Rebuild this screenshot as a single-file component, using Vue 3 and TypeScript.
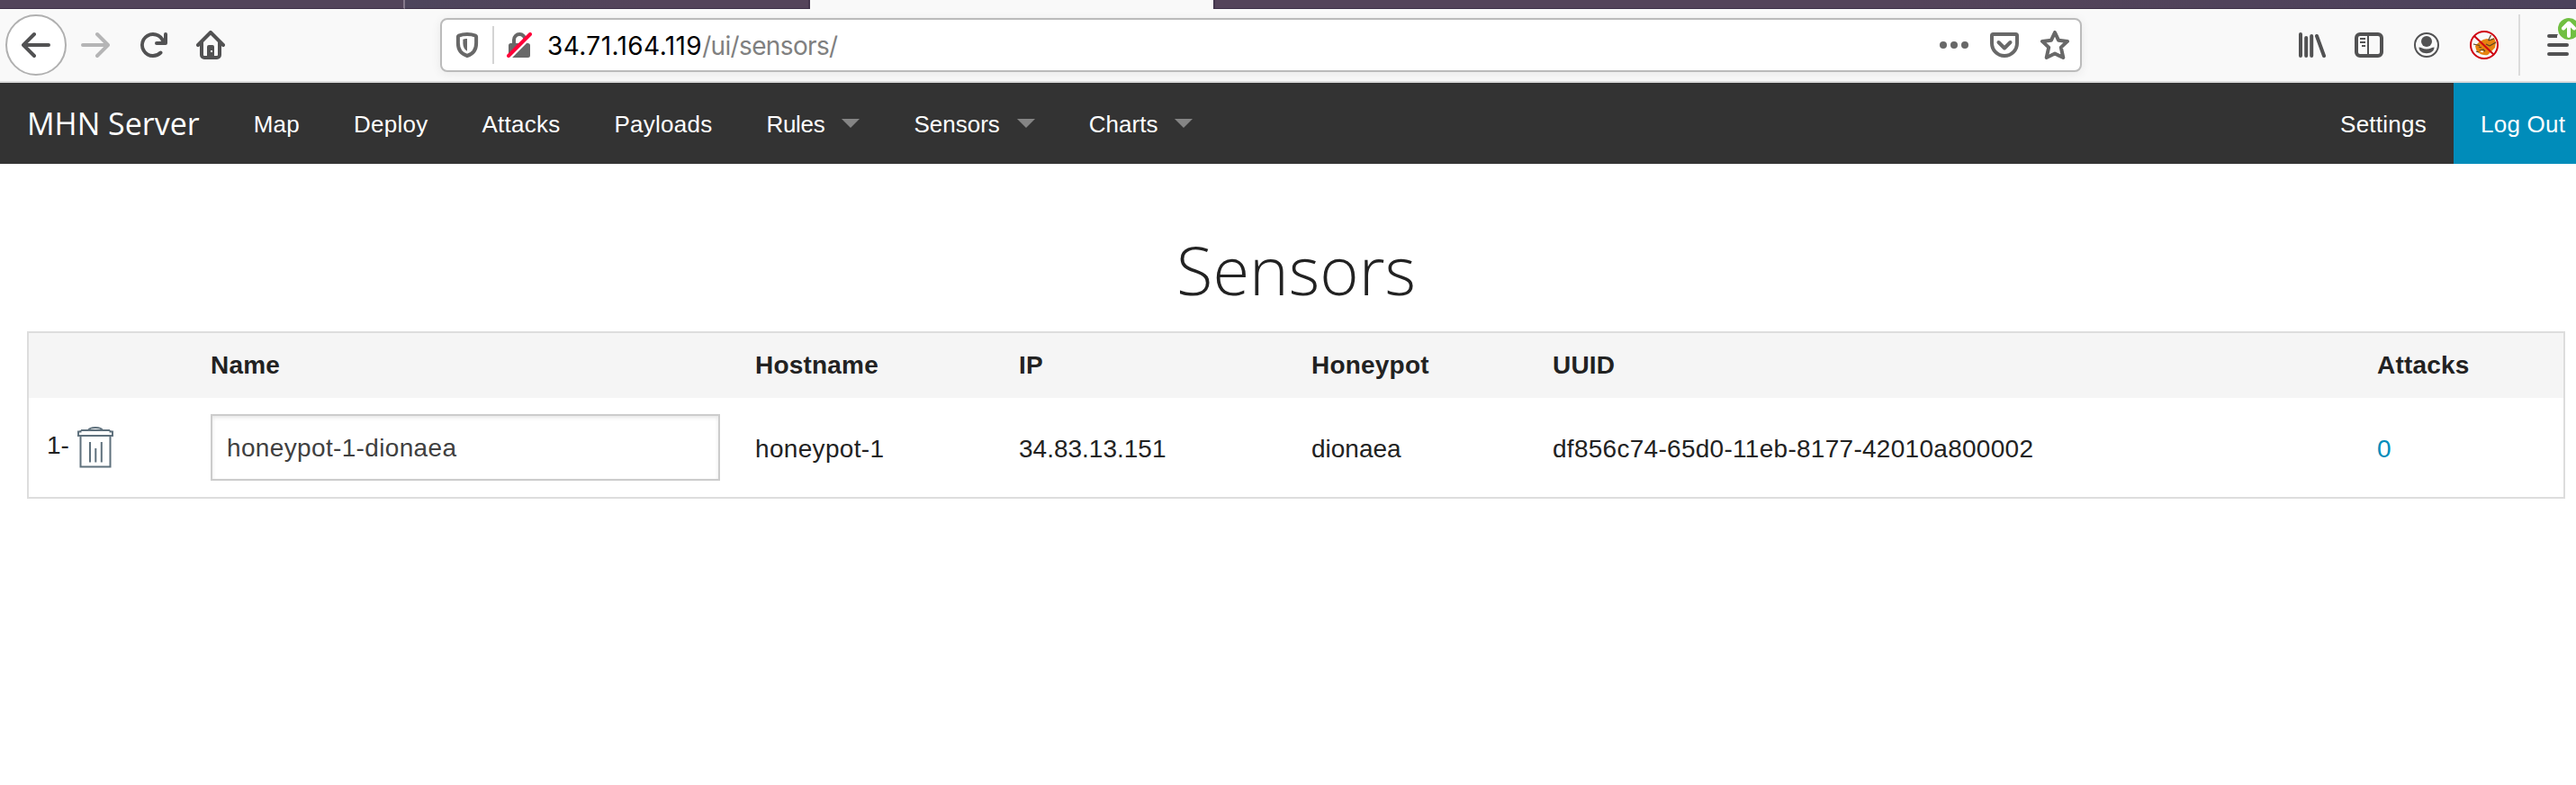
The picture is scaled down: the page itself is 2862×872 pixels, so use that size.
<script setup lang="ts">
interface NavItem {
  label: string
  dropdown?: boolean
}
interface Sensor {
  name: string
  hostname: string
  ip: string
  honeypot: string
  uuid: string
  attacks: number
}

const navItems: NavItem[] = [
  { label: 'Map' },
  { label: 'Deploy' },
  { label: 'Attacks' },
  { label: 'Payloads' },
  { label: 'Rules', dropdown: true },
  { label: 'Sensors', dropdown: true },
  { label: 'Charts', dropdown: true },
]

const headings: string[] = ['', 'Name', 'Hostname', 'IP', 'Honeypot', 'UUID', 'Attacks']

const sensors: Sensor[] = [
  {
    name: 'honeypot-1-dionaea',
    hostname: 'honeypot-1',
    ip: '34.83.13.151',
    honeypot: 'dionaea',
    uuid: 'df856c74-65d0-11eb-8177-42010a800002',
    attacks: 0,
  },
]
</script>

<template>
  <div class="window">
    <div class="tabs">
      <div class="tab first"></div>
      <div class="tab second"></div>
      <div class="tab active"></div>
      <div class="tab rest"></div>
    </div>

    <div class="toolbar">
      <div class="back">
        <svg width="32" height="32" viewBox="0 0 16 16"><path d="M15 7H3.414l4.293-4.293a1 1 0 0 0-1.414-1.414l-6 6a1 1 0 0 0 0 1.414l6 6a1 1 0 0 0 1.414-1.414L3.414 9H15a1 1 0 0 0 0-2z" /></svg>
      </div>
      <svg class="forward" width="32" height="32" viewBox="0 0 16 16"><path d="M1 7h11.586L8.293 2.707a1 1 0 0 1 1.414-1.414l6 6a1 1 0 0 1 0 1.414l-6 6a1 1 0 0 1-1.414-1.414L12.586 9H1a1 1 0 0 1 0-2z" /></svg>
      <svg class="reload" width="32" height="32" viewBox="0 0 16 16"><path d="M15 1a1 1 0 0 0-1 1v2.418A6.995 6.995 0 1 0 8 15a6.954 6.954 0 0 0 4.95-2.05 1 1 0 0 0-1.414-1.414A5.019 5.019 0 1 1 12.549 6H10a1 1 0 0 0 0 2h5a1 1 0 0 0 1-1V2a1 1 0 0 0-1-1z" /></svg>
      <svg class="home" width="32" height="32" viewBox="0 0 32 32">
        <path class="line" d="M2 16 16 2l14 14M6 13v14a3 3 0 0 0 3 3h14a3 3 0 0 0 3-3V13" />
        <path fill-rule="evenodd" d="M12 30V18a2 2 0 0 1 2-2h4a2 2 0 0 1 2 2v12zM16 22v2h2v-2z" />
      </svg>

      <div class="urlbar">
        <svg class="shield" width="26" height="28" viewBox="0 0 26 28">
          <path class="line" d="M13 2c4 0 7 .7 9.300 1.600.5.200.8.600.8 1.200V12c0 7-3.600 12-10.100 14C6.500 24 2.900 19 2.900 12V4.800c0-.6.300-1 .8-1.200C6 2.700 9 2 13 2z" />
          <path d="M13 7c-2 0-3.500.3-4.600.7V12c0 4 1.500 7 4.600 8.800z" />
        </svg>
        <i class="divider"></i>
        <svg class="lock" width="28" height="28" viewBox="0 0 28 28">
          <path class="line" d="M8 14V8.200a6.200 6.200 0 0 1 12.400 0V14" />
          <path d="M4.500 12h19a2.500 2.500 0 0 1 2.500 2.500V25.500a2.500 2.500 0 0 1-2.500 2.500H4.500A2.500 2.500 0 0 1 2 25.500V14.500A2.500 2.500 0 0 1 4.500 12z" />
          <path class="cut" d="M1.500 30.500 30.500 1.500" />
          <path class="slash" d="M2 26l24-24" />
        </svg>
        <span class="host">34.71.164.119</span><span class="path">/ui/sensors/</span>
        <svg class="dots" width="32" height="32" viewBox="0 0 32 32"><circle cx="4" cy="16" r="4" /><circle cx="16" cy="16" r="4" /><circle cx="28" cy="16" r="4" /></svg>
        <svg class="pocket" width="32" height="32" viewBox="0 0 32 32"><path class="line" d="M3.500 4h25a1.500 1.500 0 0 1 1.500 1.500V14a14 14 0 0 1-28 0V5.500A1.500 1.500 0 0 1 3.500 4z" /><path class="line" d="M9.500 13l6.500 6.500 6.500-6.500" /></svg>
        <svg class="star" width="32" height="32" viewBox="0 0 32 32"><path class="line" d="M16 2l4 8.700 10 1.200-7.200 6.700 2.500 11.400L16 25.500 6.700 30l2.500-11.400L2 11.900l10-1.200z" /></svg>
      </div>

      <svg class="library" width="32" height="32" viewBox="0 0 32 32"><path class="line" d="M4 4v24M10.200 8v20M16.200 6v22M22 6l8 22" /></svg>
      <svg class="sidebar" width="32" height="32" viewBox="0 0 32 32">
        <rect class="line" x="2" y="4" width="28" height="24" rx="4" />
        <path d="M14 5h2v22h-2zM6 8h6v2H6zM6 12h6v2H6zM8 16h4v2H8z" />
      </svg>
      <svg class="account" width="28" height="28" viewBox="0 0 28 28">
        <circle class="ring" cx="14" cy="14" r="13" />
        <circle cx="14" cy="10" r="6" />
        <path d="M5.500 16.500c2.500 0 4.500 2 8.500 2s6-2 8.500-2c0 4-3.500 6.700-8.500 6.700s-8.500-2.700-8.500-6.700z" />
      </svg>
      <svg class="fox" width="32" height="32" viewBox="0 0 32 32">
        <path class="fox-face" d="M6 17 10 13l5-3 4-1 3 1 5-2 2 5-1 6-4 4-4 4c-6 1-11-2-13-6z" />
        <path class="fox-mark" d="M4 15l7 1.500M23.500 5l-3 6M21 11l6-2M29 13l-7 4M11 22l4-1 2 2M18 15l4 2M7 23l3 1M10 18l3 1" />
        <path class="fox-eye" d="M12 23l3 .500" />
        <circle class="ban" cx="16" cy="16" r="15" />
        <path class="ban" d="M5 6l22 21" />
      </svg>
      <i class="tool-divider"></i>
      <div class="menu">
        <svg width="24" height="24" viewBox="0 0 24 24"><path d="M2 0h10q-1.500 1.500-1 4H2a2 2 0 0 1 0-4z" /><path class="line" d="M2 12h20M2 22h20" /></svg>
        <svg class="badge" width="24" height="24" viewBox="0 0 24 24"><circle cx="12" cy="12" r="12" /><path d="M12 20V6M6 11.500l6-6 6 6" /></svg>
      </div>
    </div>

    <nav class="topbar">
      <a class="brand">MHN Server</a>
      <a v-for="item in navItems" :key="item.label" class="link" :class="{ dropdown: item.dropdown }">{{ item.label }}</a>
      <span class="grow"></span>
      <a class="link">Settings</a>
      <a class="link logout">Log Out</a>
    </nav>

    <main>
      <h1>Sensors</h1>
      <table>
        <colgroup>
          <col class="c-index" /><col class="c-name" /><col class="c-host" /><col class="c-ip" /><col class="c-pot" /><col class="c-uuid" /><col />
        </colgroup>
        <thead>
          <tr><th v-for="(heading, i) in headings" :key="i">{{ heading }}</th></tr>
        </thead>
        <tbody>
          <tr v-for="(sensor, i) in sensors" :key="sensor.uuid">
            <td>
              <div class="index">
                <span>{{ i + 1 }}-</span>
                <svg width="40" height="46" viewBox="0 0 40 46">
                  <path d="M12 4c2-4 14-4 16 0M4 4h32M3.500 4v1.500H1V10h38V5.500H36.500V4M3.500 10v34.500h33V10M14 17v22.500M20.300 24v15.500M26.800 17v22.500" />
                </svg>
              </div>
            </td>
            <td><input type="text" :value="sensor.name" /></td>
            <td class="text host-cell">{{ sensor.hostname }}</td>
            <td class="text">{{ sensor.ip }}</td>
            <td class="text">{{ sensor.honeypot }}</td>
            <td class="text uuid-cell">{{ sensor.uuid }}</td>
            <td class="text"><a class="count">{{ sensor.attacks }}</a></td>
          </tr>
        </tbody>
      </table>
    </main>
  </div>
</template>

<style>
body {
  margin: 0;
  background: #fff;
}
</style>

<style scoped>
* {
  box-sizing: border-box;
}
.window {
  width: 2862px;
  height: 872px;
  overflow: hidden;
  background: #fff;
  color: #222;
  font-family: "Liberation Sans", Arial, sans-serif;
}
svg {
  display: block;
  flex: none;
}
.tabs {
  display: flex;
  height: 10px;
  background: #f9f9f9;
}
.tab {
  background: #52445a;
  border-bottom: 1px solid #3d3047;
}
.first {
  width: 450px;
  border-right: 2px solid #85798b;
}
.second {
  width: 450px;
  background: linear-gradient(90deg, #4d455c, #54445a 60%);
  border-right: 2px solid #43364c;
}
.active {
  width: 448px;
  background: #f9f9f9;
  border: 0;
}
.rest {
  flex: 1;
  border-left: 2px solid #43364c;
  background: linear-gradient(90deg, #54445a, #54445a 50%, #4c425c);
}
.toolbar {
  display: flex;
  align-items: center;
  height: 82px;
  background: #f9f9f9;
  border-bottom: 2px solid #dcdcdc;
  fill: #525253;
}
.line {
  fill: none;
  stroke: #525253;
  stroke-width: 4;
  stroke-linecap: round;
  stroke-linejoin: round;
}
.back {
  display: flex;
  align-items: center;
  justify-content: center;
  width: 68px;
  height: 68px;
  margin-left: 6px;
  border: 2px solid #b0b0b0;
  border-radius: 50%;
  background: #fff;
}
.forward {
  margin-left: 16px;
  fill: #b5b5b6;
}
.reload {
  margin-left: 32px;
}
.home {
  margin-left: 32px;
}
.urlbar {
  display: flex;
  align-items: center;
  width: 1824px;
  height: 60px;
  margin-left: 239px;
  border: 2px solid #bbb;
  border-radius: 8px;
  background: #fff;
  box-shadow: 0 2px 12px rgba(0, 0, 0, 0.07);
  fill: #686868;
  font: 28px Inter, sans-serif;
  white-space: nowrap;
}
.urlbar .line {
  stroke: #686868;
}
.shield {
  margin-left: 15px;
}
.divider {
  width: 2px;
  height: 42px;
  margin-left: 15px;
  background: #d4d4d4;
}
.lock {
  margin-left: 14px;
}
.lock .line {
  stroke-linecap: butt;
}
.cut {
  fill: none;
  stroke: #fff;
  stroke-width: 3;
}
.slash {
  fill: none;
  stroke: #ff0039;
  stroke-width: 4;
  stroke-linecap: round;
}
.host {
  margin: 2px 0 0 17px;
  color: #000;
  letter-spacing: 0.42px;
}
.path {
  margin-top: 2px;
  color: #808080;
  letter-spacing: -0.65px;
}
.dots {
  margin-left: auto;
}
.pocket {
  margin-left: 24px;
}
.star {
  margin: 0 12px 0 24px;
}
.library {
  margin-left: 239px;
}
.sidebar {
  margin-left: 32px;
}
.account {
  margin-left: 34px;
}
.ring {
  fill: none;
  stroke: #525253;
  stroke-width: 2;
}
.fox {
  margin-left: 34px;
}
.fox-face {
  fill: #e68310;
}
.fox-mark {
  fill: none;
  stroke: #5b4327;
  stroke-width: 1.2;
}
.fox-eye {
  fill: none;
  stroke: #fff;
  stroke-width: 1.5;
}
.ban {
  fill: none;
  stroke: #cf0010;
  stroke-width: 2;
}
.tool-divider {
  width: 2px;
  height: 68px;
  margin-left: 22px;
  background: #dcdcdc;
}
.menu {
  position: relative;
  flex: none;
  margin-left: 30px;
}
.badge {
  position: absolute;
  left: 12px;
  top: -18px;
  fill: #70bf41;
}
.badge path {
  fill: none;
  stroke: #fff;
  stroke-width: 4;
  stroke-linecap: round;
  stroke-linejoin: round;
}
.topbar {
  display: flex;
  height: 90px;
  background: #333;
  color: #fff;
  font-size: 26px;
  line-height: 92px;
  white-space: nowrap;
}
.brand {
  padding: 0 30px;
  font: 34px/90px "Open Sans", sans-serif;
}
.link {
  padding: 0 30px;
  letter-spacing: 0.25px;
}
.dropdown {
  display: flex;
  align-items: flex-start;
  letter-spacing: 0;
}
.dropdown:nth-of-type(6) {
  letter-spacing: -0.3px;
}
.dropdown::after {
  content: "";
  align-self: center;
  margin: 0 0 0 19px;
  border: 10px solid transparent;
  border-top-color: #858585;
  border-bottom: 0;
}
.grow {
  flex: 1;
}
.logout {
  width: 136px;
  padding-right: 0;
  background: #008cba;
}
main {
  width: 2820px;
  margin-left: 30px;
}
h1 {
  margin: 0;
  padding-top: 66px;
  height: 186px;
  font: 300 74px/104px "Open Sans", sans-serif;
  text-align: center;
}
table {
  width: 2820px;
  table-layout: fixed;
  border: 2px solid #ddd;
  border-spacing: 0;
  font-size: 28px;
  line-height: 36px;
}
.c-index {
  width: 182px;
}
.c-name {
  width: 605px;
}
.c-host {
  width: 293px;
}
.c-ip {
  width: 325px;
}
.c-pot {
  width: 268px;
}
.c-uuid {
  width: 916px;
}
th,
td {
  padding: 18px 20px;
  text-align: left;
}
th {
  height: 72px;
  background: #f5f5f5;
  letter-spacing: 0.2px;
}
tbody td {
  height: 110px;
}
tbody .text {
  padding-top: 21px;
}
.host-cell {
  letter-spacing: 0.33px;
}
.uuid-cell {
  letter-spacing: 0.28px;
}
.index {
  display: flex;
  align-items: center;
  gap: 9px;
}
.index svg {
  fill: none;
  stroke: #5f717d;
  stroke-width: 2;
}
.index span {
  margin-top: -5px;
}
input {
  display: block;
  width: 566px;
  height: 74px;
  padding: 2px 16px 0;
  border: 2px solid #ccc;
  border-radius: 0;
  background: #fff;
  box-shadow: inset 0 2px 4px rgba(0, 0, 0, 0.1);
  color: #404040;
  font: 28px "Liberation Sans", Arial, sans-serif;
  letter-spacing: 0.35px;
}
.count {
  color: #008cba;
}
</style>
